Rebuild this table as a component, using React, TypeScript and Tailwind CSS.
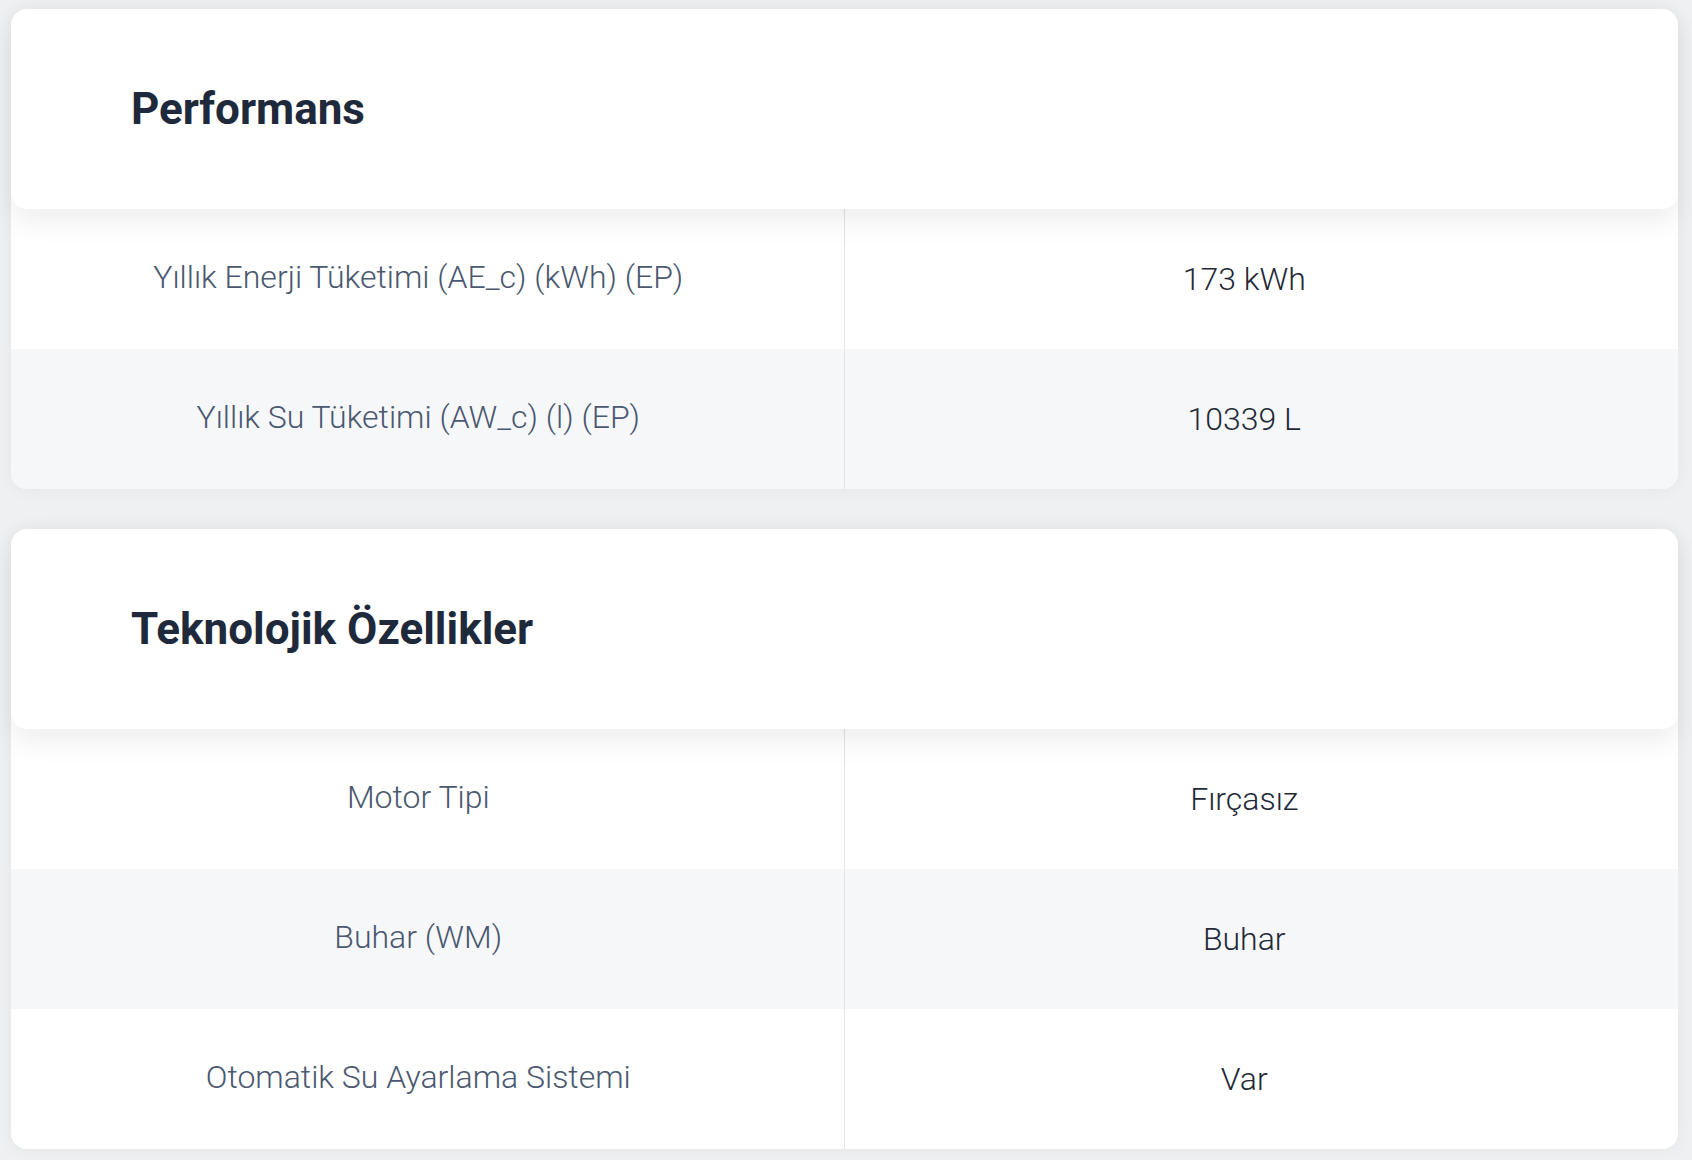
import React from 'react';

interface SpecRow {
    label: string;
    value: string;
}

interface SpecGroup {
    title: string;
    rows: SpecRow[];
}

const groups: SpecGroup[] = [
    {
        title: 'Performans',
        rows: [
            { label: 'Yıllık Enerji Tüketimi (AE_c) (kWh) (EP)', value: '173 kWh' },
            { label: 'Yıllık Su Tüketimi (AW_c) (l) (EP)', value: '10339 L' },
        ],
    },
    {
        title: 'Teknolojik Özellikler',
        rows: [
            { label: 'Motor Tipi', value: 'Fırçasız' },
            { label: 'Buhar (WM)', value: 'Buhar' },
            { label: 'Otomatik Su Ayarlama Sistemi', value: 'Var' },
        ],
    },
];

const SpecCard: React.FC<{ group: SpecGroup }> = ({ group }) => (
    <div className="rounded-2xl bg-white shadow-[0_0_18px_rgba(0,0,0,0.05)]">
        <div className="relative z-10 flex h-[200px] items-center rounded-2xl bg-white pl-[120px] shadow-[0_12px_28px_rgba(0,0,0,0.07)]">
            <h2 className="text-[44px] font-bold leading-none text-[#1e293b]">{group.title}</h2>
        </div>
        <div>
            {group.rows.map((row, idx) => {
                const isLast = idx === group.rows.length - 1;
                return (
                    <div
                        key={row.label}
                        className={
                            'grid h-[140px] grid-cols-2 ' +
                            (idx % 2 === 1 ? 'bg-[#f6f7f9] ' : 'bg-white ') +
                            (isLast ? 'rounded-b-2xl' : '')
                        }
                    >
                        <div className="flex items-center justify-center border-r border-[#e3e5e8] pb-[4px] pr-[18px] text-center text-[32px] font-light text-[#4a5870]">
                            {row.label}
                        </div>
                        <div className="flex items-center justify-center pr-[34px] text-center text-[32px] font-light text-[#1f2937]">
                            {row.value}
                        </div>
                    </div>
                );
            })}
        </div>
    </div>
);

export default function App() {
    return (
        <div className="min-h-screen bg-[#eff0f2] pb-[11px] pl-[11px] pr-[14px] pt-[9px] font-['Roboto',sans-serif]">
            <div className="flex flex-col gap-[40px]">
                {groups.map(group => (
                    <SpecCard key={group.title} group={group} />
                ))}
            </div>
        </div>
    );
}
